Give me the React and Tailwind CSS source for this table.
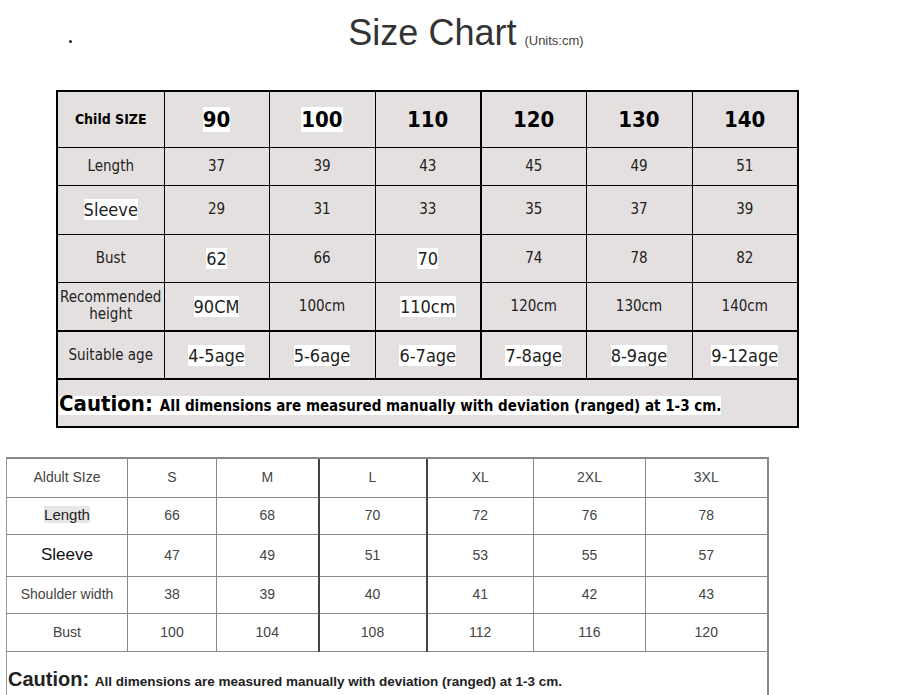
import React from "react";

const tah = { fontFamily: '"DejaVu Sans Condensed", "DejaVu Sans", sans-serif' };

const childCols = ["90", "100", "110", "120", "130", "140"];
const childRows = [
  { label: "Length", vals: ["37", "39", "43", "45", "49", "51"], h: "h-[38px]" },
  { label: "Sleeve", vals: ["29", "31", "33", "35", "37", "39"], h: "h-[49px]", big: true },
  { label: "Bust", vals: ["62", "66", "70", "74", "78", "82"], h: "h-[48px]", hi: [0, 2] },
  { label: "Recommended height", vals: ["90CM", "100cm", "110cm", "120cm", "130cm", "140cm"], h: "h-[49px]", hi: [0, 2], rec: true },
];
const ages = ["4-5age", "5-6age", "6-7age", "7-8age", "8-9age", "9-12age"];

const adultCols = ["S", "M", "L", "XL", "2XL", "3XL"];
const adultRows = [
  { label: "Length", vals: ["66", "68", "70", "72", "76", "78"], h: "h-[37px]" },
  { label: "Sleeve", vals: ["47", "49", "51", "53", "55", "57"], h: "h-[42px]" },
  { label: "Shoulder width", vals: ["38", "39", "40", "41", "42", "43"], h: "h-[37px]" },
  { label: "Bust", vals: ["100", "104", "108", "112", "116", "120"], h: "h-[38px]" },
];

function cborder(i) {
  const base = "border-y border-black ";
  let l = i === 0 ? "border-l-2" : i === 4 ? "border-l-2" : "border-l";
  let r = i === 6 ? "border-r-2" : "";
  return base + l + " " + r + " border-black";
}

function aBorder(i) {
  let l = "border-l border-[#888]";
  if (i === 3 || i === 4) l = "border-l-2 border-l-[#444]";
  if (i === 0) l = "border-l border-l-[#999]";
  const r = i === 6 ? " border-r-2 border-r-[#888]" : "";
  return "border-y border-y-[#888] " + l + r;
}

export default function App() {
  return (
    <div className="w-[918px] h-[695px] bg-white overflow-hidden relative">
      <div className="absolute left-[69px] top-[40px] w-[3px] h-[3px] rounded-full bg-[#222]" />
      <div className="h-[90px] flex justify-center pl-[14px]">
        <div className="flex items-baseline gap-[8px] pt-[13px]" style={{ fontFamily: '"Liberation Sans", Arial, sans-serif' }}>
          <span className="text-[36px] text-[#333] leading-[40px]">Size Chart</span>
          <span className="text-[13px] text-[#444]">(Units:cm)</span>
        </div>
      </div>

      <div className="pl-[56px]">
        <table className="border-collapse bg-[#e5e0e0] table-fixed w-[741px] text-black" style={tah}>
          <colgroup>
            <col className="w-[107px]" />
            <col className="w-[105px]" />
            <col className="w-[106px]" />
            <col className="w-[106px]" />
            <col className="w-[105px]" />
            <col className="w-[106px]" />
            <col className="w-[106px]" />
          </colgroup>
          <tbody>
            <tr className="h-[56px]">
              <td className={"text-center font-bold text-[14px] border-t-2 " + cborder(0)}>Child SIZE</td>
              {childCols.map((c, i) => (
                <td key={c} className={"text-center font-bold text-[22px] border-t-2 " + cborder(i + 1)}>
                  <span className={i < 2 ? "bg-white" : ""}>{c}</span>
                </td>
              ))}
            </tr>
            {childRows.map((r) => (
              <tr key={r.label} className={r.h}>
                <td className={"text-center text-[#222] " + cborder(0) + (r.rec ? " text-[15px] leading-[17px]" : r.big ? " text-[18px]" : " text-[15px]")}>
                  {r.big ? <span className="bg-white">{r.label}</span> : r.rec ? (<>Recommended<br />height</>) : r.label}
                </td>
                {r.vals.map((v, i) => {
                  const hi = r.hi && r.hi.includes(i);
                  return (
                    <td key={i} className={"text-center text-[#222] " + cborder(i + 1) + (hi ? " text-[18px]" : " text-[15px]")}>
                      {hi ? <span className="bg-white">{v}</span> : v}
                    </td>
                  );
                })}
              </tr>
            ))}
            <tr className="h-[48px]">
              <td className={"text-center text-[15px] text-[#222] border-t-2 " + cborder(0)}>Suitable age</td>
              {ages.map((a, i) => (
                <td key={a} className={"text-center text-[18px] text-[#222] border-t-2 " + cborder(i + 1)}>
                  <span className="bg-white">{a}</span>
                </td>
              ))}
            </tr>
            <tr className="h-[48px]">
              <td colSpan={7} className="border-2 border-black pl-[1px] pt-[1px]">
                <span className="bg-white font-bold">
                  <span className="text-[22px]">Caution: </span>
                  <span className="text-[15px]">AII dimensions are measured manually with deviation (ranged) at 1-3 cm.</span>
                </span>
              </td>
            </tr>
          </tbody>
        </table>
      </div>

      <div className="pl-[6px] pt-[29px]">
        <table className="border-collapse table-fixed w-[761px] bg-white text-[#444]" style={{ fontFamily: '"Liberation Sans", Arial, sans-serif' }}>
          <colgroup>
            <col className="w-[121px]" />
            <col className="w-[89px]" />
            <col className="w-[102px]" />
            <col className="w-[108px]" />
            <col className="w-[107px]" />
            <col className="w-[112px]" />
            <col className="w-[122px]" />
          </colgroup>
          <tbody>
            <tr className="h-[39px]">
              <td className={"text-center text-[14px] border-t-2 border-t-[#888] " + aBorder(0)}>Aldult SIze</td>
              {adultCols.map((c, i) => (
                <td key={c} className={"text-center text-[14px] border-t-2 border-t-[#888] " + aBorder(i + 1)}>{c}</td>
              ))}
            </tr>
            {adultRows.map((r) => (
              <tr key={r.label} className={r.h}>
                <td className={"text-center " + aBorder(0) + (r.label === "Sleeve" ? " text-[17px] text-[#111]" : r.label === "Length" ? " text-[15px] text-[#222]" : " text-[14px]")}>
                  {r.label === "Length" ? <span className="bg-[#e6e6e6]">{r.label}</span> : r.label}
                </td>
                {r.vals.map((v, i) => (
                  <td key={i} className={"text-center text-[14px] " + aBorder(i + 1)}>{v}</td>
                ))}
              </tr>
            ))}
            <tr className="h-[60px]">
              <td colSpan={7} className="border-l border-l-[#999] border-r-2 border-r-[#888] border-t border-t-[#888] align-top pt-[12px] pl-[1px] text-[#222]">
                <span className="font-bold">
                  <span className="text-[20px]">Caution: </span>
                  <span className="text-[13.5px]">All dimensions are measured manually with deviation (ranged) at 1-3 cm.</span>
                </span>
              </td>
            </tr>
          </tbody>
        </table>
      </div>
    </div>
  );
}
